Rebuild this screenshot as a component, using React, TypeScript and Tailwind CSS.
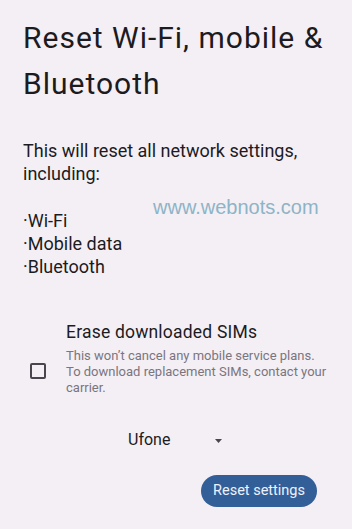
export default function App() {
  return (
    <div
      className="w-[352px] h-[529px] overflow-hidden bg-[#f4eff4] text-[#1c1b1f] relative"
      style={{ fontFamily: 'Roboto, "Noto Sans", sans-serif' }}
    >
      {/* Title */}
      <h1 className="pl-[23px] pt-[15px] text-[30px] leading-[46px] font-normal tracking-[1px]">
        Reset Wi-Fi, mobile &amp;
        <br />
        Bluetooth
      </h1>

      {/* Description */}
      <p className="pl-[23px] pt-[32px] text-[18px] leading-[23px]">
        This will reset all network settings,
        <br />
        including:
      </p>

      <ul className="pl-[23px] pt-[24px] text-[18px] leading-[23px]">
        <li>·Wi-Fi</li>
        <li>·Mobile data</li>
        <li>·Bluetooth</li>
      </ul>

      {/* Watermark */}
      <div
        className="absolute left-[153px] top-[196px] text-[20px] leading-[22px] text-[#8db4c7]"
        style={{ fontFamily: '"Liberation Sans", Arial, sans-serif' }}
      >
        www.webnots.com
      </div>

      {/* Erase SIMs option */}
      <div className="flex items-start pt-[43px]">
        <div className="w-[66px] flex pl-[30px] pt-[42px] shrink-0">
          <div className="w-[16px] h-[16px] border-2 border-[#49454f] rounded-[2px]" />
        </div>
        <div>
          <div className="text-[17.5px] leading-[22px] tracking-[0.2px]">Erase downloaded SIMs</div>
          <div className="text-[13px] leading-[16px] text-[#7a757f] pt-[5px]">
            This won’t cancel any mobile service plans.
            <br />
            To download replacement SIMs, contact your
            <br />
            carrier.
          </div>
        </div>
      </div>

      {/* Carrier dropdown */}
      <div className="flex items-center pl-[128px] pt-[34px]">
        <span className="text-[16px] leading-[20px] w-[87px]">Ufone</span>
        <svg width="7" height="4" viewBox="0 0 7 4" className="mt-[1px]">
          <path d="M0 0h7L3.5 4z" fill="#49454f" />
        </svg>
      </div>

      {/* Action */}
      <div className="flex justify-end pr-[35px] pt-[25px]">
        <button className="h-[32px] px-[12px] rounded-full bg-[#335f99] text-[#eef2fb] text-[14.5px] leading-[20px]">
          Reset settings
        </button>
      </div>
    </div>
  );
}
